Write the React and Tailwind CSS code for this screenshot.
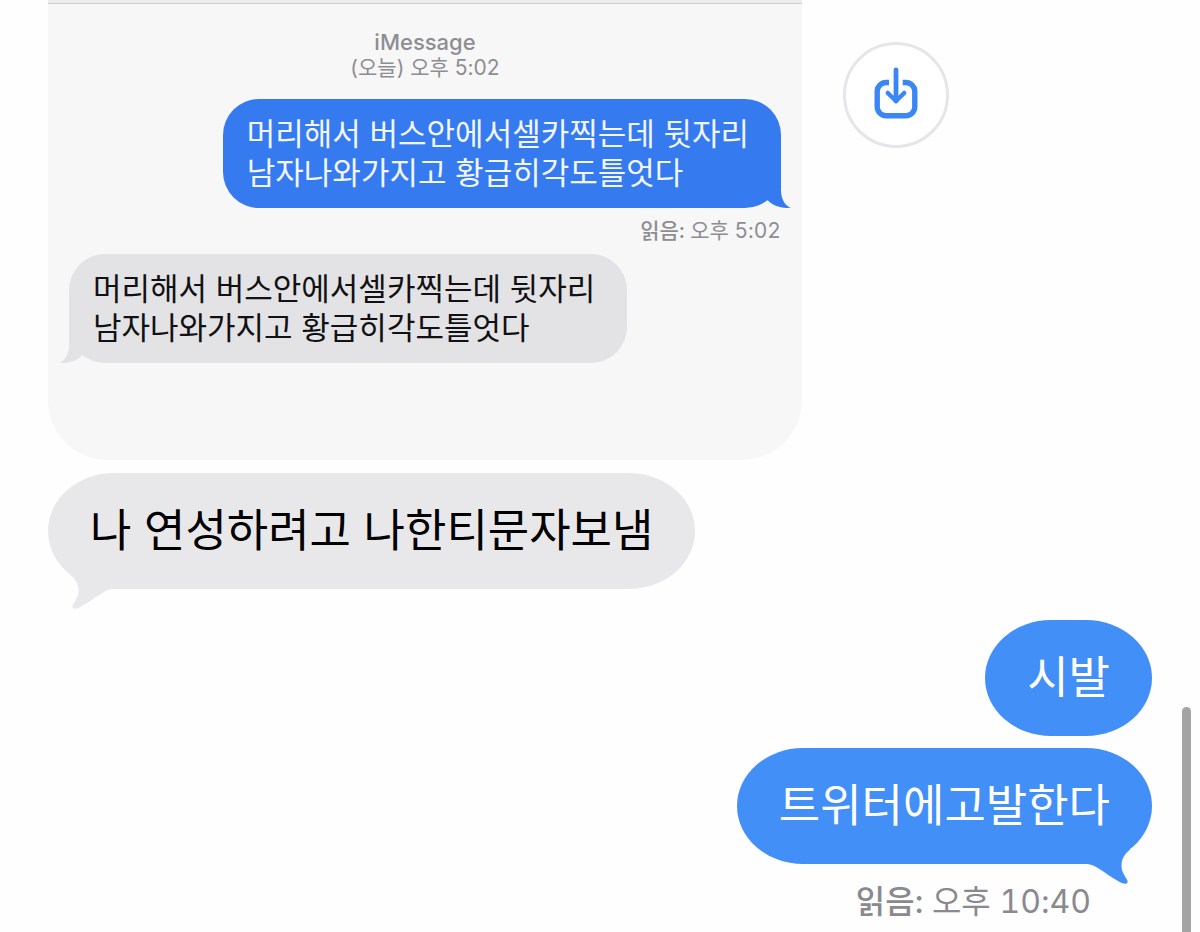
import React from "react";

const LATIN_KR = "font-['Inter','Noto_Sans_CJK_KR',sans-serif]";

const FORWARDED_TEXT = "머리해서 버스안에서셀카찍는데 뒷자리\n남자나와가지고 황급히각도틀엇다";

function ForwardedBubble({ sent }) {
  return (
    <div
      className={
        "relative w-fit rounded-[36px] pt-[13px] pr-8 pb-[18px] pl-6 text-[31px] leading-[39px] " +
        (sent ? "self-end bg-[#367af0] text-[#f1f6ff]" : "self-start bg-[#e3e3e5] text-[#111113]")
      }
    >
      <p className="whitespace-pre-line">{FORWARDED_TEXT}</p>
      <svg
        viewBox="0 0 36 40"
        aria-hidden="true"
        className={
          "absolute bottom-0 h-10 w-9 " +
          (sent ? "-right-2.5 fill-[#367af0]" : "-left-2.5 -scale-x-100 fill-[#e3e3e5]")
        }
      >
        <path d="M0 0H26V22C26 31 30 38 36 39.600C26 41 17 37 13 32.500L0 26Z" />
      </svg>
    </div>
  );
}

function Bubble({ children, sent, tail }) {
  return (
    <div
      className={
        "relative w-fit rounded-[66px/58px] px-[42px] pt-[23px] pb-[29px] text-[45px] leading-[64px] " +
        (sent ? "self-end bg-[#428ff7] text-white" : "self-start bg-[#e8e8ea] text-black")
      }
    >
      {children}
      {tail && (
        <svg
          viewBox="0 0 56 48"
          aria-hidden="true"
          className={
            "absolute -bottom-6 h-12 w-14 " +
            (sent ? "right-4 fill-[#428ff7]" : "left-4 -scale-x-100 fill-[#e8e8ea]")
          }
        >
          <path d="M0 24H7C15 24 24 33 38 41C42 43.500 46 44.500 47.300 43C49.500 40 41.500 35 41.500 26C41.500 18 45 14 50 9.500L40 0H0Z" />
        </svg>
      )}
    </div>
  );
}

export default function App() {
  return (
    <main className="relative min-h-screen overflow-hidden bg-[#fefefe] px-12 font-['Noto_Sans_CJK_KR',sans-serif]" lang="ko">
      <div className="flex items-start gap-[41px]">
        <section className="flex w-full max-w-[754px] flex-col rounded-b-[60px] border-t-[3px] border-[#ededee] bg-[#f7f7f8] pb-[97px]">
          <div className="h-px bg-[#cdcdcf]" />
          <div className={"mt-[25px] text-center leading-[26px] text-[#8e8e92] " + LATIN_KR}>
            <p className="text-[22px] leading-[26px] font-medium">iMessage</p>
            <p className="text-[21px] leading-[26px]">(오늘) 오후 5:02</p>
          </div>
          <div className="mt-[18px] flex flex-col px-[21px]">
            <ForwardedBubble sent />
            <p className={"my-[10px] self-end text-[21px] leading-[26px] text-[#8e8e92] tabular-nums " + LATIN_KR}>
              <span className="font-medium">읽음:</span> 오후 5:02
            </p>
            <ForwardedBubble />
          </div>
        </section>
        <button
          type="button"
          aria-label="저장"
          className="mt-[42px] flex size-[106px] shrink-0 items-center justify-center rounded-full border-[3px] border-[#e6e6e9] bg-white"
        >
          <svg viewBox="0 0 48 58" aria-hidden="true" className="h-[58px] w-12 fill-none stroke-[#3a86f4]">
            <path strokeWidth="5.400" d="M17 16.500H14A9 9 0 0 0 5.200 25V41A9 9 0 0 0 14 49.800H34A9 9 0 0 0 42.800 41V25A9 9 0 0 0 34 16.500H30.700" />
            <path strokeWidth="4.800" strokeLinecap="round" d="M24 4V35" />
            <path strokeWidth="4.500" strokeLinecap="round" strokeLinejoin="round" d="M15.800 27L24 35L32.200 27" />
          </svg>
        </button>
      </div>

      <div className="mt-[13px] flex flex-col">
        <Bubble tail>나 연성하려고 나한티문자보냄</Bubble>
        <div className="mt-[31px] flex flex-col gap-3">
          <Bubble sent>시발</Bubble>
          <Bubble sent tail>
            트위터에고발한다
          </Bubble>
        </div>
        <p className={"mt-[18px] mr-[61px] self-end text-[32px] leading-[40px] text-[#8a8a8e] tabular-nums " + LATIN_KR}>
          <span className="font-medium">읽음:</span> 오후 10:40
        </p>
      </div>

      <div className="absolute right-[9px] bottom-0 h-[225px] w-[9px] rounded-t-full bg-[#a4a4a4]" />
    </main>
  );
}
